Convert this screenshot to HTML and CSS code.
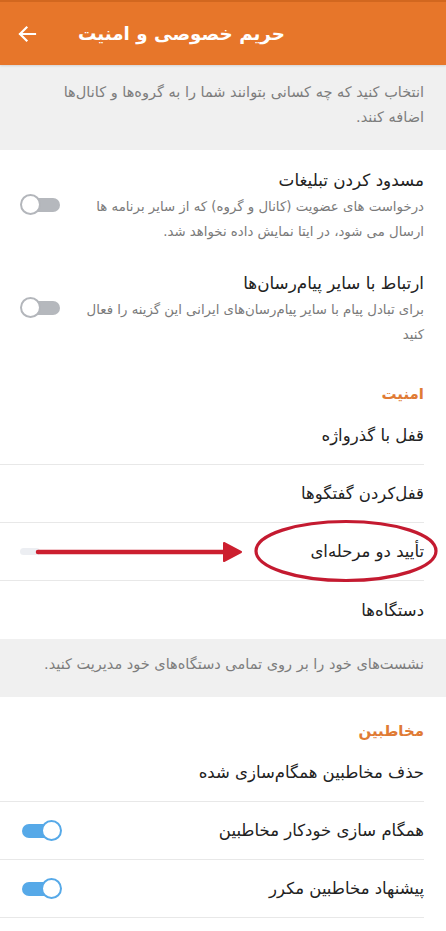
FILE: index.html
```html
<!DOCTYPE html>
<html lang="fa">
<head>
<meta charset="utf-8">
<link rel="stylesheet" href="styles.css">
</head>
<body>
<div class="screen">
  <header class="appbar">
    <svg class="back" width="20" height="18" viewBox="0 0 20 18"><path d="M18 9H3M9.5 2.5L3 9l6.5 6.5" fill="none" stroke="#fff" stroke-width="2.2" stroke-linecap="square"/></svg>
    <h1 class="title">حریم خصوصی و امنیت</h1>
  </header>

  <p class="note note-top">انتخاب کنید که چه کسانی بتوانند شما را به گروه‌ها و کانال‌ها اضافه کنند.</p>

  <div class="opt">
    <div class="opt-text">
      <div class="opt-title">مسدود کردن تبلیغات</div>
      <div class="opt-desc">درخواست های عضویت (کانال و گروه) که از سایر برنامه ها ارسال می شود، در ایتا نمایش داده نخواهد شد.</div>
    </div>
    <span class="switch"></span>
  </div>

  <div class="opt">
    <div class="opt-text">
      <div class="opt-title">ارتباط با سایر پیام‌رسان‌ها</div>
      <div class="opt-desc">برای تبادل پیام با سایر پیام‌رسان‌های ایرانی این گزینه را فعال کنید</div>
    </div>
    <span class="switch"></span>
  </div>

  <div class="section-head sec-security">امنیت</div>
  <div class="row">قفل با گذرواژه</div>
  <div class="row">قفل‌کردن گفتگوها</div>
  <div class="row row-2fa">تأیید دو مرحله‌ای<span class="ghost"></span></div>
  <div class="row row-last">دستگاه‌ها</div>

  <p class="note note-devices">نشست‌های خود را بر روی تمامی دستگاه‌های خود مدیریت کنید.</p>

  <div class="section-head sec-contacts">مخاطبین</div>
  <div class="row">حذف مخاطبین همگام‌سازی شده</div>
  <div class="row">همگام سازی خودکار مخاطبین<span class="switch on"></span></div>
  <div class="row">پیشنهاد مخاطبین مکرر<span class="switch on"></span></div>

  <svg class="annot" width="446" height="80" viewBox="0 0 446 80">
    <line x1="38" y1="42" x2="228" y2="42" stroke="#cc1f2f" stroke-width="4.5" stroke-linecap="round"/>
    <path d="M224 33 L241 42 L224 51 Z" fill="#cc1f2f" stroke="#cc1f2f" stroke-width="2" stroke-linejoin="round"/>
    <ellipse cx="346" cy="41" rx="90" ry="29.5" fill="none" stroke="#c41a30" stroke-width="3.2"/>
  </svg>
</div>
</body>
</html>
```

FILE: styles.css
```css
html, body {
  margin: 0;
  padding: 0;
  background: #ffffff;
}

.screen {
  position: relative;
  width: 446px;
  min-height: 931px;
  background: #ffffff;
  font-family: "DejaVu Sans", "Noto Sans", sans-serif;
  color: #212121;
  overflow: hidden;
}

.appbar {
  height: 65px;
  background: #e7762a;
  border-top: 2px solid #d2671f;
  box-sizing: border-box;
  display: flex;
  align-items: center;
  padding-left: 17px;
  box-shadow: 0 1px 2px rgba(0,0,0,0.12);
  position: relative;
  z-index: 1;
}

.back {
  display: block;
  flex: none;
}

.title {
  margin: 0 0 0 41px;
  font-size: 18.3px;
  font-weight: bold;
  color: #ffffff;
  direction: rtl;
  white-space: nowrap;
}

.note {
  margin: 0;
  background: #f0f0f0;
  color: #7d7d7d;
  font-size: 14.5px;
  line-height: 25px;
  direction: rtl;
  text-align: right;
  padding: 15px 22px 20px 30px;
}

.note-devices {
  padding: 12px 22px 20px 20px;
  line-height: 26px;
}

.opt {
  display: flex;
  direction: rtl;
  align-items: center;
  justify-content: space-between;
  padding: 16px 22px 9px 20px;
}

.opt-text {
  flex: 1;
  text-align: right;
  padding-left: 18px;
}

.opt-title {
  font-size: 16.8px;
  line-height: 28px;
  color: #222;
}

.opt-desc {
  font-size: 13.3px;
  line-height: 25px;
  color: #7a7a7a;
}

.switch {
  position: relative;
  flex: none;
  width: 40px;
  height: 22px;
  display: inline-block;
}

.switch::before {
  content: "";
  position: absolute;
  left: 4px;
  right: 0;
  top: 4px;
  height: 14px;
  border-radius: 7px;
  background: #b5b8bd;
}

.switch::after {
  content: "";
  position: absolute;
  left: 0;
  top: 0;
  width: 17px;
  height: 17px;
  border-radius: 50%;
  background: #ffffff;
  border: 2.5px solid #b3b6bb;
}

.switch.on::before {
  left: 0;
  right: 4px;
  background: #56a9e8;
}

.switch.on::after {
  left: auto;
  right: 0;
  border-color: #56a9e8;
}

.section-head {
  direction: rtl;
  text-align: right;
  color: #e07b35;
  font-size: 15px;
  font-weight: bold;
  line-height: 24px;
  padding: 26px 22px 1px 20px;
}

.sec-contacts {
  padding-top: 22px;
}

.row {
  position: relative;
  display: flex;
  direction: rtl;
  align-items: center;
  justify-content: space-between;
  height: 58px;
  box-sizing: border-box;
  margin-right: 22px;
  padding: 0 0 0 20px;
  border-bottom: 1px solid #e8e8e8;
  font-size: 16.5px;
  color: #222;
}

.row .switch {
  margin-left: 2px;
}

.row-last {
  border-bottom: none;
}

.ghost {
  display: block;
  width: 20px;
  height: 7px;
  border-radius: 4px;
  background: #eceef2;
}

.annot {
  position: absolute;
  left: 0;
  top: 510px;
  pointer-events: none;
}
```
